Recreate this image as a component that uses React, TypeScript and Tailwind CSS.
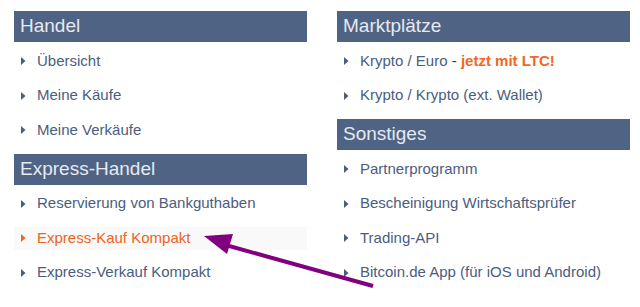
const sections = {
  left: [
    {
      title: "Handel",
      items: [{ label: "Übersicht" }, { label: "Meine Käufe" }, { label: "Meine Verkäufe" }],
    },
    {
      title: "Express-Handel",
      items: [
        { label: "Reservierung von Bankguthaben" },
        { label: "Express-Kauf Kompakt", active: true },
        { label: "Express-Verkauf Kompakt" },
      ],
    },
  ],
  right: [
    {
      title: "Marktplätze",
      items: [{ label: "Krypto / Euro", extra: "jetzt mit LTC!" }, { label: "Krypto / Krypto (ext. Wallet)" }],
    },
    {
      title: "Sonstiges",
      items: [
        { label: "Partnerprogramm" },
        { label: "Bescheinigung Wirtschaftsprüfer" },
        { label: "Trading-API" },
        { label: "Bitcoin.de App (für iOS und Android)" },
      ],
    },
  ],
};

type Item = { label: string; active?: boolean; extra?: string };

function Bullet({ active }: { active?: boolean }) {
  return (
    <svg width="5" height="8" viewBox="0 0 5 8" className="shrink-0">
      <path d="M0 0 L4.5 4 L0 8 Z" fill={active ? "#ee6420" : "#4b5d7e"} />
    </svg>
  );
}

function Section({ title, items }: { title: string; items: Item[] }) {
  return (
    <div className="pb-[12px]">
      <div className="h-[31px] bg-[#4f6385] pl-[6px] flex items-center text-[19px] text-[#e6eaf0]">{title}</div>
      <ul className="pt-[7.5px] flex flex-col gap-[11.5px]">
        {items.map((item) => (
          <li
            key={item.label}
            className={`h-[23px] flex items-center pl-[7px] gap-[11px] text-[15px] ${
              item.active ? "bg-[#f9f9f9] text-[#ee6420]" : "text-[#4b5d7e]"
            }`}
          >
            <Bullet active={item.active} />
            <span>
              {item.label}
              {item.extra && (
                <>
                  <span className="text-[#333]"> - </span>
                  <span className="font-bold text-[#f26722]">{item.extra}</span>
                </>
              )}
            </span>
          </li>
        ))}
      </ul>
    </div>
  );
}

export default function App() {
  return (
    <div className="relative w-[640px] h-[307px] bg-white overflow-hidden font-['Liberation_Sans',Arial,sans-serif]">
      <div className="flex gap-[30px] pl-[14px] pt-[11px]">
        <div className="w-[293px]">
          {sections.left.map((s) => (
            <Section key={s.title} {...s} />
          ))}
        </div>
        <div className="w-[293px]">
          {sections.right.map((s) => (
            <Section key={s.title} {...s} />
          ))}
        </div>
      </div>

      {/* annotation arrow */}
      <svg className="absolute left-0 top-0 pointer-events-none" width="640" height="307">
        <line x1="373" y1="286" x2="222" y2="244" stroke="#800080" strokeWidth="4" />
        <path d="M204 236 L233 234 L227 254 Z" fill="#800080" />
      </svg>
    </div>
  );
}
